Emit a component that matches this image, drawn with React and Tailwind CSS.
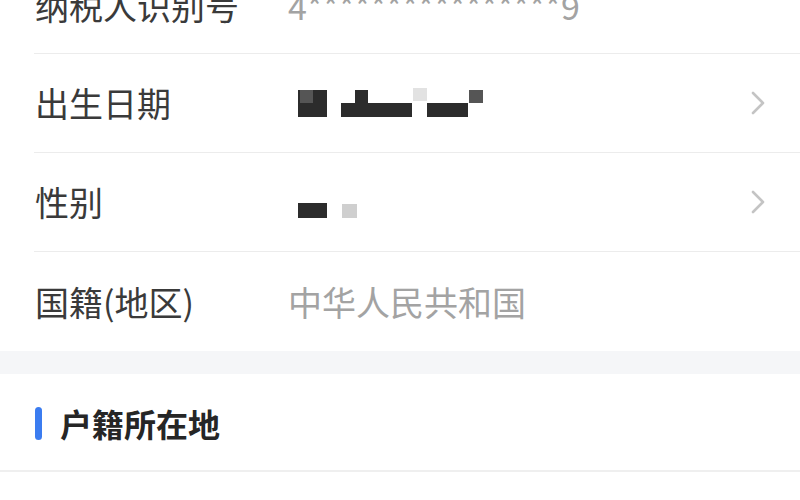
import React from "react";

const Chevron = () => (
  <svg width="16" height="24" viewBox="0 0 16 24" fill="none" className="shrink-0">
    <path d="M3 2 L13 12 L3 22" stroke="#c4c4c4" strokeWidth="2.6" strokeLinecap="round" strokeLinejoin="round" />
  </svg>
);

const Row = ({ label, children, chevron, last }) => (
  <div className={"ml-[34px] flex h-[99px] items-center pr-[34px] " + (last ? "" : "border-b border-[#ececec]")}>
    <div className="w-[254px] shrink-0 pl-[1px] text-[34px] leading-none text-[#3a3a3a]">{label}</div>
    <div className="flex flex-1 items-center">{children}</div>
    {chevron && <Chevron />}
  </div>
);

export default function App() {
  return (
    <div
      className="h-[500px] w-[800px] overflow-hidden bg-white"
      style={{ fontFamily: '"Noto Sans CJK SC", "Noto Sans", sans-serif' }}
    >
      <div className="mt-[-45px]">
        <div className="border-b border-[#ececec] ml-[34px] flex h-[99px] items-center pr-[34px] pt-[4px]">
          <div className="w-[254px] shrink-0 pl-[1px] text-[34px] leading-none text-[#3a3a3a]">纳税人识别号</div>
          <div className="text-[34px] leading-none text-[#a3a3a3]">4****************9</div>
        </div>
        <Row label="出生日期" chevron>
          <div className="relative h-[30px] w-[200px]">
            <div className="absolute left-[10px] top-[2px] h-[27px] w-[29px] bg-[#2c2c2c]" />
            <div className="absolute left-[12px] top-[2px] h-[13px] w-[13px] bg-[#555555]" />
            <div className="absolute left-[67px] top-[2px] h-[14px] w-[13px] bg-[#2c2c2c]" />
            <div className="absolute left-[53px] top-[15px] h-[14px] w-[71px] bg-[#2c2c2c]" />
            <div className="absolute left-[125px] top-[0px] h-[13px] w-[14px] bg-[#e2e2e2]" />
            <div className="absolute left-[139px] top-[15px] h-[14px] w-[41px] bg-[#2c2c2c]" />
            <div className="absolute left-[181px] top-[2px] h-[13px] w-[14px] bg-[#555555]" />
          </div>
        </Row>
        <Row label="性别" chevron>
          <div className="relative h-[30px] w-[100px]">
            <div className="absolute left-[10px] top-[16px] h-[15px] w-[29px] bg-[#2c2c2c]" />
            <div className="absolute left-[54px] top-[17px] h-[14px] w-[15px] bg-[#cfcfcf]" />
          </div>
        </Row>
        <Row label="国籍(地区)" last>
          <div className="text-[34px] leading-none text-[#a3a3a3]">中华人民共和国</div>
        </Row>
      </div>
      <div className="h-[23px] bg-[#f5f6f8]" />
      <div className="flex h-[98px] items-center gap-[18px] border-b-2 border-[#efefef] pl-[35px] pt-[2px]">
        <div className="h-[33px] w-[7px] rounded-full bg-[#3b7cf0]" />
        <div className="text-[32px] font-semibold leading-none text-[#262626]">户籍所在地</div>
      </div>
      <div className="ml-[34px] flex h-[80px] items-center pr-[34px] pt-[26px]">
        <div className="w-[254px] shrink-0 pl-[1px] text-[34px] leading-none text-[#e2e2e2]">户籍所在</div>
        <div className="text-[34px] leading-none text-[#e8e8e8]">地区</div>
      </div>
    </div>
  );
}
